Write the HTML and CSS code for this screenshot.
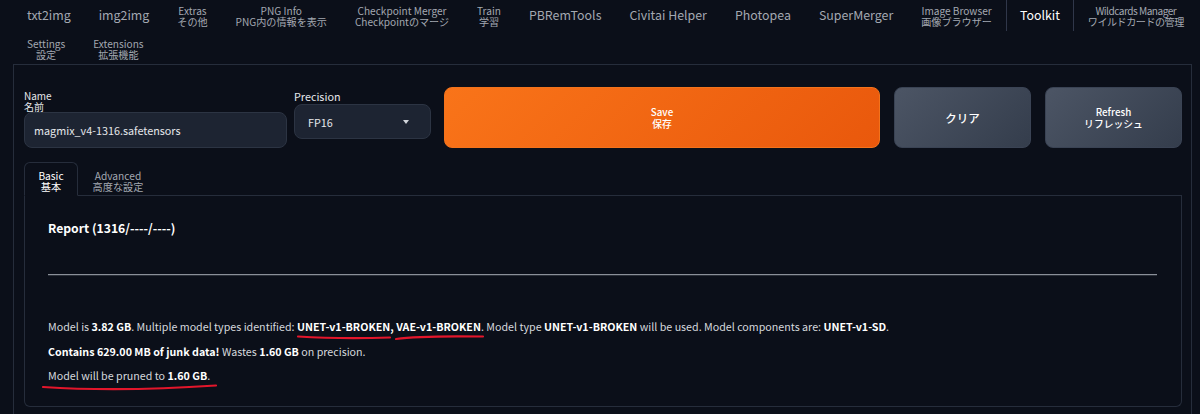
FILE: index.html
```html
<!DOCTYPE html>
<html lang="en">
<head>
  <meta charset="UTF-8" />
  <title>Toolkit</title>
  <link rel="stylesheet" href="styles.css">
</head>
<body>
  <nav class="tabs">
    <div class="tab-row">
      <button class="tab">txt2img</button>
      <button class="tab">img2img</button>
      <button class="tab two">Extras<br>その他</button>
      <button class="tab two">PNG Info<br>PNG内の情報を表示</button>
      <button class="tab two">Checkpoint Merger<br>Checkpointのマージ</button>
      <button class="tab two">Train<br>学習</button>
      <button class="tab">PBRemTools</button>
      <button class="tab">Civitai Helper</button>
      <button class="tab">Photopea</button>
      <button class="tab">SuperMerger</button>
      <button class="tab two">Image Browser<br>画像ブラウザー</button>
      <button class="tab selected">Toolkit</button>
      <button class="tab two tight">Wildcards Manager<br>ワイルドカードの管理</button>
    </div>
    <div class="tab-row">
      <button class="tab two row2">Settings<br>設定</button>
      <button class="tab two row2">Extensions<br>拡張機能</button>
    </div>
  </nav>

  <main class="panel">
    <div class="top-row">
      <label class="field name-field">
        <span class="label two-line">Name<br>名前</span>
        <input class="text-input" type="text" value="magmix_v4-1316.safetensors">
      </label>
      <label class="field precision-field">
        <span class="label">Precision</span>
        <div class="select">
          <span>FP16</span>
          <span class="caret"></span>
        </div>
      </label>
      <button class="btn primary">Save<br>保存</button>
      <button class="btn secondary clear">クリア</button>
      <button class="btn secondary">Refresh<br>リフレッシュ</button>
    </div>

    <div class="subtabs">
      <button class="subtab active">Basic<br>基本</button>
      <button class="subtab">Advanced<br>高度な設定</button>
    </div>
    <section class="report">
      <h3>Report (1316/----/----)</h3>
      <hr>
      <p>Model is <b>3.82 GB</b>. Multiple model types identified: <b>UNET-v1-BROKEN, VAE-v1-BROKEN</b>. Model type <b>UNET-v1-BROKEN</b> will be used. Model components are: <b>UNET-v1-SD</b>.</p>
      <p><b>Contains 629.00 MB of junk data!</b> Wastes <b>1.60 GB</b> on precision.</p>
      <p>Model will be pruned to <b>1.60 GB</b>.</p>
    </section>
  </main>

  <!-- hand drawn annotation marks -->
  <svg class="marks" width="1200" height="414" viewBox="0 0 1200 414">
    <path d="M298 336.5 Q340 339 390 337.5" />
    <path d="M396 339 Q420 335.5 483 336.5" />
    <path d="M43 387 Q120 392 216 385.5" />
  </svg>
</body>
</html>
```

FILE: styles.css
```css
:root {
  --bg: #0b0f19;
  --border: #262d3b;
  --input: #1d2432;
  --text: #e5e7eb;
  --muted: #a3a8b1;
}
* { box-sizing: border-box; margin: 0; padding: 0; }
body {
  font-family: "Noto Sans CJK JP", "Noto Sans", sans-serif;
  background: var(--bg);
  color: var(--text);
  width: 1200px;
  height: 414px;
  overflow: hidden;
  position: relative;
}
button { font-family: inherit; border: none; background: none; color: inherit; }

.tabs {
  padding-left: 13px;
  height: 64px;
}
.tab-row { display: flex; }
.tab {
  flex-shrink: 0;
  height: 31px;
  padding: 0 13px;
  font-size: 12.4px;
  line-height: 1;
  color: var(--muted);
  border-left: 1px solid transparent;
  border-right: 1px solid transparent;
  white-space: nowrap;
}
.tab.two { font-size: 10.1px; line-height: 11px; }
.tab.tight { letter-spacing: -0.5px; }
.tab.selected {
  color: #fff;
  border-color: #30374a;
}
.tab.row2 { height: 33px; padding-top: 3px; }

.panel {
  margin: 0 8px 0 13px;
  border: 1px solid var(--border);
  border-bottom: none;
  padding: 22px 9px 0 10px;
  height: 360px;
}
.top-row {
  display: flex;
  align-items: flex-start;
  height: 75px;
}
.field { display: flex; flex-direction: column; }
.label { font-size: 10.8px; line-height: 12px; color: var(--text); }
.label.two-line { font-size: 10px; line-height: 10.5px; margin-top: 4px; }
.name-field { width: 263px; margin-right: 7px; }
.text-input {
  margin-top: 0;
  height: 36px;
  background: var(--input);
  border: 1px solid #2c3443;
  border-radius: 8px;
  color: var(--text);
  font-family: inherit;
  font-size: 10.8px;
  padding: 0 9px;
}
.precision-field { width: 137px; margin-right: 13px; margin-top: 3px; }
.select {
  margin-top: 2px;
  height: 35px;
  background: var(--input);
  border: 1px solid #2c3443;
  border-radius: 8px;
  display: flex;
  align-items: center;
  justify-content: space-between;
  padding: 0 21px 0 13px;
  font-size: 10.8px;
}
.caret {
  width: 0; height: 0;
  border-left: 3.5px solid transparent;
  border-right: 3.5px solid transparent;
  border-top: 4px solid #d1d5db;
}
.btn {
  height: 61px;
  border-radius: 8px;
  font-size: 9.8px;
  line-height: 12px;
  color: #fff;
  font-weight: 500;
}
.primary {
  width: 436px;
  margin-right: 14px;
  background: linear-gradient(135deg, #f97419, #e9580c);
  border: 1px solid #f3731c;
}
.secondary {
  width: 137px;
  margin-right: 14px;
  background: linear-gradient(135deg, #4c5565, #343d4c);
  border: 1px solid #3a4354;
}
.secondary:last-child { margin-right: 0; }
.secondary.clear { font-size: 11.5px; }

.subtabs {
  display: flex;
  height: 34px;
  border-bottom: 1px solid var(--border);
}
.subtab {
  width: 54px;
  font-size: 10.2px;
  line-height: 11px;
  color: var(--muted);
  padding-top: 4px;
}
.subtab + .subtab { width: 80px; }
.subtab.active {
  color: #fff;
  border: 1px solid var(--border);
  border-bottom: 1px solid var(--bg);
  border-radius: 6px 6px 0 0;
  margin-bottom: -1px;
}
.report {
  width: 1158px;
  height: 211px;
  border: 1px solid var(--border);
  border-top: none;
  border-radius: 0 0 6px 6px;
  padding: 22px 24px 0 23px;
}
.report h3 {
  font-size: 12.2px;
  font-weight: 600;
  color: #fff;
  line-height: 20px;
}
.report hr {
  margin: 36px 0 43px;
  border: none;
  border-top: 1px solid #8a8f98;
  border-bottom: 1px solid #2a2f38;
}
.report p {
  font-size: 10.7px;
  line-height: 16px;
  color: #d6d9de;
  margin-bottom: 8.5px;
}
.report b { color: #fff; font-weight: 700; }

.marks {
  position: absolute;
  top: 0;
  left: 0;
  pointer-events: none;
}
.marks path {
  fill: none;
  stroke: #e3162b;
  stroke-width: 2.2;
  stroke-linecap: round;
}
```
